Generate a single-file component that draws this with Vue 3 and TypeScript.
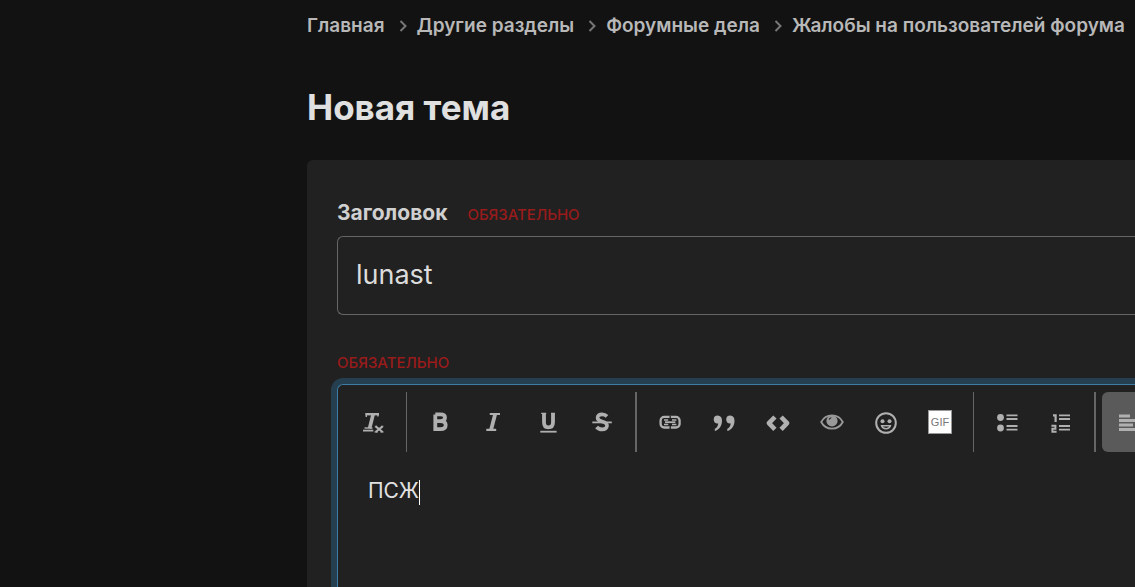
<script setup lang="ts">
import { ref } from 'vue'

const crumbs: string[] = ['Главная', 'Другие разделы', 'Форумные дела', 'Жалобы на пользователей форума']

interface Tool {
  id: string
  label: string
  active?: boolean
}

const groups: Tool[][] = [
  [{ id: 'clear', label: 'Очистить форматирование' }],
  [
    { id: 'bold', label: 'Жирный' },
    { id: 'italic', label: 'Курсив' },
    { id: 'underline', label: 'Подчёркнутый' },
    { id: 'strike', label: 'Зачёркнутый' },
  ],
  [
    { id: 'link', label: 'Ссылка' },
    { id: 'quote', label: 'Цитата' },
    { id: 'code', label: 'Код' },
    { id: 'eye', label: 'Скрытый текст' },
    { id: 'smile', label: 'Смайлы' },
    { id: 'gif', label: 'Вставить GIF' },
  ],
  [
    { id: 'ul', label: 'Маркированный список' },
    { id: 'ol', label: 'Нумерованный список' },
  ],
  [{ id: 'left', label: 'По левому краю', active: true }],
]

const title = ref('lunast')
</script>

<template>
  <main class="page">
    <nav class="crumbs">
      <template v-for="(crumb, i) in crumbs" :key="crumb">
        <svg v-if="i > 0" class="chevron" viewBox="0 0 8 12"><path d="M1.5 1L6.5 6L1.5 11" /></svg>
        <a href="#">{{ crumb }}</a>
      </template>
    </nav>

    <h1>Новая тема</h1>

    <form class="card" @submit.prevent>
      <div class="label-row">
        <label for="thread-title">Заголовок</label>
        <span class="required">Обязательно</span>
      </div>
      <input id="thread-title" v-model="title" class="title-input" type="text" />

      <div class="required editor-note">Обязательно</div>
      <div class="editor">
        <div class="toolbar" role="toolbar">
          <div v-for="(group, g) in groups" :key="g" class="group" :class="{ thick: g % 2 === 1 }">
            <button
              v-for="tool in group"
              :key="tool.id"
              type="button"
              class="tool"
              :class="{ active: tool.active }"
              :aria-label="tool.label"
            >
              <svg class="icon" viewBox="0 0 24 24">
                <g v-if="tool.id === 'clear'" class="line">
                  <path d="M4.5 4.2H18" stroke-width="2.4" />
                  <path d="M5.3 3V7M17.4 3L16.8 6.5" stroke-width="1.4" />
                  <path d="M12.2 4L8.6 18.4" stroke-width="3.6" />
                  <path d="M2 20.6H12.3" stroke-width="1.8" />
                  <path d="M3.5 18H11.5" stroke-width="1.4" />
                  <path d="M14.6 16.4L21.6 22M21.6 16.4L14.6 22" stroke-width="2" />
                  <path d="M13.5 22H17M19.3 22H22.6M13.8 16.3H16M20.2 16.3H22.4" stroke-width="1" />
                </g>
                <g v-else-if="tool.id === 'bold'" class="line">
                  <path d="M7.3 4.4H12.4C15.4 4.4 17 5.5 17 7.6S15.4 11.1 12.4 11.1H7.3M12.4 11.1C15.9 11.1 17.7 12.4 17.7 15.1S15.9 19.2 12.4 19.2H7.3V4.4" stroke-width="3.8" />
                </g>
                <g v-else-if="tool.id === 'italic'" class="line">
                  <path d="M7.8 4H18M4.3 19.8H14.2" stroke-width="2.2" />
                  <path d="M13.2 4L9.1 19.8" stroke-width="3.8" />
                </g>
                <g v-else-if="tool.id === 'underline'" class="line">
                  <path d="M8 3V12.3C8 16 9.3 17.4 12.3 17.4S17 16 17 12.3V3" stroke-width="3.8" />
                  <path d="M4.3 21.7H20.6" stroke-width="1.8" />
                  <path d="M5.2 3.4H10.2M15 3.4H19" stroke-width="1.4" />
                </g>
                <g v-else-if="tool.id === 'strike'" class="line">
                  <path d="M17 6.4C15.6 5 13.9 4.4 12 4.4C9.2 4.4 7.6 5.5 7.6 7.7C7.6 10.3 9.7 10.9 12.1 11.5C14.8 12.2 17 13.2 17 15.6C17 18 14.9 19.4 12.2 19.4C9.9 19.4 8 18.7 6.6 17" stroke-width="3.7" />
                  <path d="M2.3 12.4H21.8" stroke-width="1.8" />
                </g>
                <g v-else-if="tool.id === 'link'" class="line">
                  <rect x="2.6" y="6.9" width="19" height="10.6" rx="3.6" stroke-width="2.3" />
                  <path d="M6 10H10.2M14 10H18.4M6 14.5H10.2M14 14.5H18.4" stroke-width="1.5" />
                  <path d="M7 12.2H17.4" stroke-width="1.8" />
                  <path class="cut" d="M12.2 5.5V10.6M12.2 13.8V19" stroke-width="1.3" />
                </g>
                <g v-else-if="tool.id === 'quote'" class="fill">
                  <path d="M1.7 9.5A4 4 0 0 1 5.7 5.5C8.6 5.5 10 7.7 10 10.7C10 15.7 7.4 19.7 2.8 21V18.7C4.8 17.9 6 16.1 6.2 13.5C3.6 13.9 1.7 12 1.7 9.5Z" />
                  <path d="M14.2 9.5A4 4 0 0 1 18.2 5.5C21.1 5.5 22.5 7.7 22.5 10.7C22.5 15.7 19.9 19.7 15.3 21V18.7C17.3 17.9 18.5 16.1 18.7 13.5C16.1 13.9 14.2 12 14.2 9.5Z" />
                </g>
                <g v-else-if="tool.id === 'code'" class="line round">
                  <path d="M8.9 7L2.9 13.2L8.9 19.4M15.1 7L21.1 13.2L15.1 19.4" stroke-width="4.6" />
                </g>
                <g v-else-if="tool.id === 'eye'">
                  <path class="dim line" d="M1.2 12C5.8 3.2 18.2 3.2 22.8 12C18.2 20.8 5.8 20.8 1.2 12Z" stroke-width="1.8" />
                  <circle class="dim fill" cx="12" cy="10.9" r="5.6" />
                  <path class="cut" d="M9.2 9.6C9.4 8.6 10.2 7.9 11.3 7.8" stroke-width="1.1" />
                </g>
                <g v-else-if="tool.id === 'smile'" class="line">
                  <circle cx="12" cy="13" r="9.8" stroke-width="2" />
                  <circle class="dot" cx="8.5" cy="11.2" r="2" />
                  <circle class="dot" cx="15.5" cy="11.2" r="2" />
                  <path d="M7.6 15.8C8.8 19.6 15.2 19.6 16.4 15.8Z" stroke-width="1.5" />
                </g>
                <g v-else-if="tool.id === 'gif'">
                  <rect class="gif-box" x="0.5" y="0.5" width="23" height="23" />
                  <text class="gif-text" x="12" y="16" text-anchor="middle">GIF</text>
                </g>
                <g v-else-if="tool.id === 'ul'" class="line">
                  <circle class="dot" cx="5.5" cy="7.5" r="3.4" />
                  <circle class="dot" cx="5.5" cy="18" r="3.4" />
                  <path d="M11.5 5.3H22.5M11.5 9H22.5M11.5 16H22.5M11.5 19.7H22.5" stroke-width="1.8" />
                </g>
                <g v-else-if="tool.id === 'ol'" class="line">
                  <path d="M4 5.3H6.6V12" stroke-width="2.2" />
                  <path d="M2.4 15.8H6.4V18.8H3.4V21.8H7.6" stroke-width="2" />
                  <path d="M10 5.3H21M10 9H21M10 16H21M10 19.7H21" stroke-width="1.8" />
                </g>
                <g v-else class="line">
                  <path d="M2 6H13M2 10.5H22M2 15H16M2 19.5H22" stroke-width="3" />
                </g>
              </svg>
            </button>
          </div>
        </div>
        <div class="body" contenteditable="true" role="textbox" aria-label="Сообщение" spellcheck="false">ПСЖ<span class="caret"></span></div>
      </div>
    </form>
  </main>
</template>

<style>
body {
  background: #121212;
}
</style>

<style scoped>
.page {
  min-height: 100vh;
  box-sizing: border-box;
  padding-left: 307px;
  overflow: hidden;
  display: flex;
  flex-direction: column;
  font-family: Inter, Roboto, "Liberation Sans", sans-serif;
  color: #e0e0e0;
}

.crumbs {
  display: flex;
  align-items: center;
  padding-top: 12px;
  white-space: nowrap;
  font-size: 19px;
  line-height: 28px;
  font-weight: 600;
}

.crumbs a {
  color: #b8b8b8;
  text-decoration: none;
}

.chevron {
  flex: none;
  width: 8px;
  height: 12px;
  margin: 0 10px 0 14px;
  fill: none;
  stroke: #777;
  stroke-width: 2;
}

h1 {
  margin: 45px 0 31px;
  font-size: 35px;
  line-height: 44px;
  font-weight: 700;
}

.card {
  flex: 1;
  display: flex;
  flex-direction: column;
  padding: 38px 0 0 30px;
  background: #212121;
  border-radius: 6px 0 0 0;
}

.label-row {
  display: flex;
  align-items: baseline;
  gap: 20px;
  line-height: 30px;
}

.label-row label {
  font-size: 21px;
  font-weight: 700;
  color: #d0d0d0;
}

.required {
  font-size: 15px;
  font-weight: 500;
  text-transform: uppercase;
  color: #991b1b;
}

.title-input {
  box-sizing: border-box;
  width: 100%;
  height: 79px;
  margin-top: 6px;
  padding: 0 18px 2px;
  border: 1px solid #666;
  border-right: 0;
  border-radius: 6px 0 0 6px;
  outline: 0;
  background: transparent;
  color: #dcdcdc;
  font-family: inherit;
  font-size: 27px;
}

.editor-note {
  margin-top: 37px;
  line-height: 22px;
}

.editor {
  flex: 1;
  margin-top: 10px;
  border: 1px solid #3f7ca5;
  border-width: 1px 0 0 1px;
  border-radius: 6px 0 0 0;
  box-shadow: 0 0 0 6px #263f50;
}

.toolbar {
  display: flex;
  padding: 7px 0 0 2px;
  overflow: hidden;
}

.group {
  flex: none;
  display: flex;
  padding: 0 6px;
  border-right: 1px solid #666;
}

.group.thick {
  border-right-width: 2px;
}

.group:last-child {
  border-right: 0;
}

.tool {
  width: 54px;
  height: 60px;
  display: flex;
  align-items: center;
  justify-content: center;
  padding: 0;
  border: 0;
  border-radius: 6px;
  background: transparent;
}

.tool.active {
  background: #5a5a5a;
}

.icon {
  width: 24px;
  height: 24px;
  overflow: visible;
}

.line {
  fill: none;
  stroke: #b0b0b0;
}

.round {
  stroke-linejoin: round;
}

.fill {
  fill: #b0b0b0;
}

.dot {
  fill: #b0b0b0;
  stroke: none;
}

.line.dim {
  stroke: #999;
}

.fill.dim {
  fill: #999;
}

.cut {
  fill: none;
  stroke: #212121;
}

.gif-box {
  fill: #fff;
  stroke: #999;
}

.gif-text {
  fill: #777;
  font-size: 11px;
  font-weight: 500;
}

.body {
  padding: 24px 30px;
  outline: 0;
  font-size: 21px;
  line-height: 30px;
}

.caret {
  display: inline-block;
  width: 1px;
  height: 25px;
  vertical-align: middle;
  background: #fff;
}
</style>
